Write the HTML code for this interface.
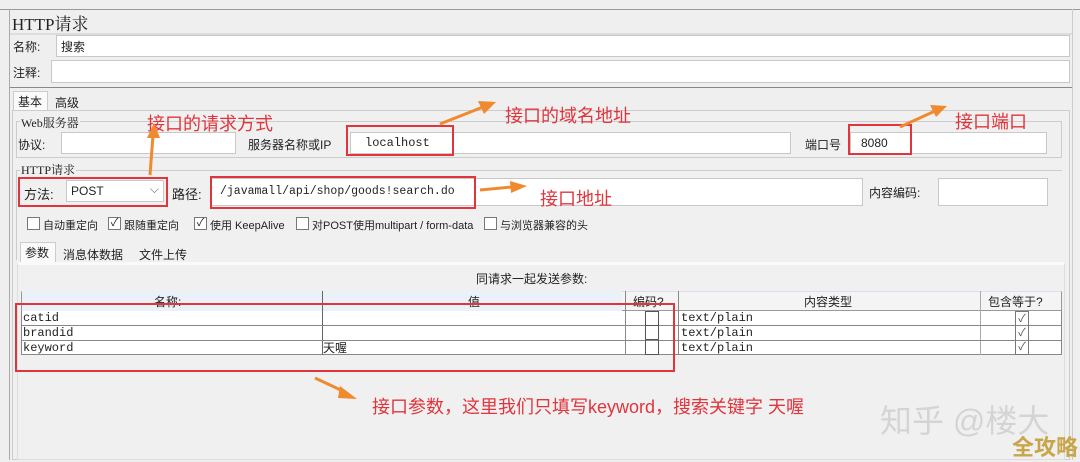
<!DOCTYPE html><html><head><meta charset="utf-8"><style>
body{margin:0;width:1080px;height:460px;background:#efefef;position:relative;overflow:hidden;font-family:"Liberation Sans","Noto Sans CJK SC",sans-serif;font-size:12px;color:#222}
div,span{position:absolute;box-sizing:border-box}
.in{background:#fff;border:1px solid #c8c8c8}
.mono{font-family:"Liberation Mono","Noto Sans CJK SC",monospace;font-size:12px}
.red{border:2px solid #e0353d}
.ann{color:#e0353d;font-size:18px;white-space:nowrap}
.cb{width:13px;height:13px;border:1px solid #777;background:#fff}
.lbl{white-space:nowrap}
.grp{border:1px solid #ccc}
</style></head><body>
<div style="left:0;top:9px;width:1080px;height:1px;background:#999"></div>
<div style="left:9px;top:9px;width:1px;height:451px;background:#aaa"></div>
<div style="left:1072px;top:9px;width:1px;height:451px;background:#ccc"></div>
<div class="lbl" style="left:12px;top:10px;font-size:17px;font-family:'Liberation Serif','Noto Serif CJK SC',serif">HTTP请求</div>
<div style="left:10px;top:33px;width:1062px;height:2px;background:#ddd"></div>
<div class="lbl" style="left:13px;top:38px">名称:</div>
<div class="in" style="left:56px;top:35px;width:1014px;height:22px;padding:2px 4px">搜索</div>
<div class="lbl" style="left:13px;top:64px">注释:</div>
<div class="in" style="left:51px;top:60px;width:1019px;height:23px"></div>
<div style="left:10px;top:87px;width:1062px;height:1px;background:#888"></div>
<div style="left:13px;top:91px;width:35px;height:20px;background:#fafafa;border:1px solid #ccc;border-bottom:none;padding:1px 4px" class="lbl">基本</div>
<div class="lbl" style="left:55px;top:94px">高级</div>
<div style="left:12px;top:110px;width:1058px;height:350px;border:1px solid #ccc;background:#f0f0f0"></div>
<div class="grp" style="left:16px;top:121px;width:1046px;height:37px"></div>
<div class="lbl" style="left:20px;top:114px;background:#f0f0f0;padding:0 1px;font-family:'Liberation Serif','Noto Serif CJK SC',serif">Web服务器</div>
<div class="lbl" style="left:18px;top:136px">协议:</div>
<div class="in" style="left:61px;top:132px;width:175px;height:22px"></div>
<div class="lbl" style="left:248px;top:136px">服务器名称或IP</div>
<div class="in" style="left:350px;top:132px;width:441px;height:22px"></div>
<div class="mono" style="left:365px;top:136px">localhost</div>
<div class="lbl" style="left:805px;top:136px">端口号</div>
<div class="in" style="left:850px;top:132px;width:197px;height:22px;padding:3px 10px;font-size:12px">8080</div>
<div class="grp" style="left:16px;top:170px;width:1046px;height:90px;border-right:none;border-bottom:none"></div>
<div class="lbl" style="left:20px;top:161px;background:#f0f0f0;padding:0 1px;font-family:'Liberation Serif','Noto Serif CJK SC',serif">HTTP请求</div>
<div class="lbl" style="left:24px;top:184px;font-size:13px">方法:</div>
<div class="in" style="left:66px;top:180px;width:98px;height:22px;padding:3px 4px;font-size:12px">POST<span style="right:4px;top:1px;color:#666">⌵</span></div>
<div class="lbl" style="left:172px;top:184px;font-size:13px">路径:</div>
<div class="in" style="left:211px;top:178px;width:652px;height:28px"></div>
<div class="mono" style="left:220px;top:185px;font-size:11.5px">/javamall/api/shop/goods!search.do</div>
<div class="lbl" style="left:869px;top:184px">内容编码:</div>
<div class="in" style="left:938px;top:178px;width:110px;height:28px"></div>
<div class="cb" style="left:27px;top:217px"></div><div class="lbl" style="left:43px;top:217px;font-size:11px">自动重定向</div>
<div class="cb" style="left:108px;top:217px;font-size:11px;line-height:10px;text-align:center">✓</div><div class="lbl" style="left:124px;top:217px;font-size:11px">跟随重定向</div>
<div class="cb" style="left:194px;top:217px;font-size:11px;line-height:10px;text-align:center">✓</div><div class="lbl" style="left:210px;top:217px;font-size:11px">使用 KeepAlive</div>
<div class="cb" style="left:296px;top:217px"></div><div class="lbl" style="left:312px;top:217px;font-size:11px">对POST使用multipart / form-data</div>
<div class="cb" style="left:484px;top:217px"></div><div class="lbl" style="left:500px;top:217px;font-size:11px">与浏览器兼容的头</div>
<div style="left:20px;top:242px;width:36px;height:21px;background:#fafafa;border:1px solid #ccc;border-bottom:none;padding:1px 4px" class="lbl">参数</div>
<div class="lbl" style="left:63px;top:246px">消息体数据</div>
<div class="lbl" style="left:139px;top:246px">文件上传</div>
<div style="left:17px;top:262px;width:1048px;height:198px;border:1px solid #ddd;border-top:3px solid #fafafa"></div>
<div class="lbl" style="left:476px;top:270px">同请求一起发送参数:</div>
<div style="left:21px;top:291px;width:1041px;height:64px;border:1px solid #888;background:#fff"></div>
<div style="left:21px;top:291px;width:1041px;height:20px;background:#f4f4f4;border:1px solid #999;border-top-color:#dde"></div>
<div style="left:22px;top:291px;width:600px;height:20px;background:#eaf1f8"></div>
<div style="left:322px;top:291px;width:1px;height:64px;background:#666"></div>
<div style="left:625px;top:291px;width:1px;height:64px;background:#888"></div>
<div style="left:678px;top:291px;width:1px;height:64px;background:#888"></div>
<div style="left:980px;top:291px;width:1px;height:64px;background:#aaa"></div>
<div style="left:21px;top:325px;width:1041px;height:1px;background:#888"></div>
<div style="left:21px;top:340px;width:1041px;height:1px;background:#888"></div>
<div class="lbl" style="left:154px;top:293px">名称:</div>
<div class="lbl" style="left:468px;top:293px">值</div>
<div class="lbl" style="left:633px;top:293px">编码?</div>
<div class="lbl" style="left:804px;top:293px">内容类型</div>
<div class="lbl" style="left:988px;top:293px">包含等于?</div>
<div class="mono" style="left:23px;top:311px">catid</div>
<div class="mono" style="left:23px;top:326px">brandid</div>
<div class="mono" style="left:23px;top:341px">keyword</div>
<div class="lbl" style="left:323px;top:339px;font-size:12px">天喔</div>
<div class="mono" style="left:681px;top:311px">text/plain</div>
<div class="mono" style="left:681px;top:326px">text/plain</div>
<div class="mono" style="left:681px;top:341px">text/plain</div>
<div style="left:645px;top:311px;width:14px;height:44px;border:1px solid #555"></div>
<div style="left:645px;top:325px;width:14px;height:15px;border-top:1px solid #555;border-bottom:1px solid #555"></div>
<div style="left:1015px;top:311px;width:14px;height:44px;border:1px solid #777;font-size:11px;line-height:14px;text-align:center;color:#555">✓<br>✓<br>✓</div>
<div class="red" style="left:18px;top:177px;width:150px;height:30px"></div>
<div class="red" style="left:210px;top:176px;width:266px;height:33px"></div>
<div class="red" style="left:346px;top:125px;width:108px;height:31px"></div>
<div class="red" style="left:848px;top:124px;width:64px;height:31px"></div>
<div class="red" style="left:15px;top:303px;width:660px;height:69px"></div>
<div class="ann" style="left:147px;top:110px">接口的请求方式</div>
<div class="ann" style="left:505px;top:102px">接口的域名地址</div>
<div class="ann" style="left:955px;top:108px">接口端口</div>
<div class="ann" style="left:540px;top:185px">接口地址</div>
<div class="ann" style="left:372px;top:393px">接口参数，这里我们只填写keyword，搜索关键字 天喔</div>
<svg style="position:absolute;left:0;top:0" width="1080" height="460">
<g stroke="#f08a30" stroke-width="3" fill="#f08a30">
<line x1="150" y1="175" x2="153" y2="135"/><polygon points="147,138 160,138 154,123" stroke="none"/>
<line x1="440" y1="124" x2="483" y2="107"/><polygon points="478,101 496,102 484,114" stroke="none"/>
<line x1="900" y1="127" x2="935" y2="111"/><polygon points="930,105 947,106 936,117" stroke="none"/>
<line x1="480" y1="190" x2="512" y2="187"/><polygon points="510,181 527,186 511,193" stroke="none"/>
<line x1="315" y1="378" x2="345" y2="392"/><polygon points="340,386 357,399 338,398" stroke="none"/>
</g></svg>
<div class="lbl" style="left:880px;top:396px;font-size:32px;color:#d4d4d4">知乎 @楼大</div>
<div class="lbl" style="left:1012px;top:430px;font-size:22px;font-weight:bold;color:#c9a54a">全攻略</div>
</body></html>
